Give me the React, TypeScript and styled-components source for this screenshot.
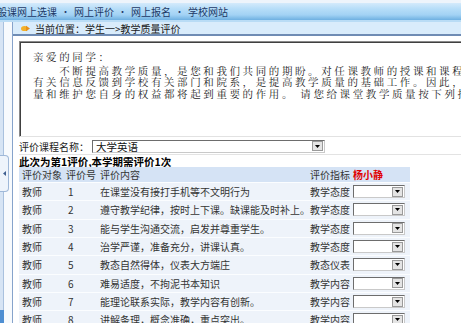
import React from "react";
import styled, { createGlobalStyle } from "styled-components";

const GlobalStyle = createGlobalStyle`
  html, body { margin: 0; padding: 0; background: #fff; overflow: hidden; }
  body { font-family: "Noto Sans CJK SC", "Noto Sans", sans-serif; font-size: 10px; color: #222; }
`;

const Page = styled.div`
  width: 461px;
  height: 323px;
  overflow: hidden;
  display: flex;
  flex-direction: column;
`;

const TopStrip = styled.div`
  height: 3px;
  background: #eef4fb;
`;

const NavBar = styled.div`
  height: 17px;
  background: linear-gradient(#d4eafb 0%, #b6ddf8 35%, #a2d2f4 70%, #6eb0e1 100%);
  display: flex;
  align-items: center;
  white-space: nowrap;
  overflow: hidden;
  color: #1d3966;
  font-size: 10px;
`;

const NavItem = styled.span<{ $first?: boolean }>`
  margin-left: ${(p) => (p.$first ? "-3px" : "0")};
`;

const NavSep = styled.span`
  width: 17px;
  text-align: center;
  font-size: 9px;
`;

const NavLine = styled.div`
  height: 2px;
  background: #b9dcf5;
`;

const Body = styled.div`
  flex: 1;
  display: flex;
  min-height: 0;
`;

const Sidebar = styled.div`
  width: 12px;
  flex: none;
  display: flex;
  flex-direction: column;
  background: linear-gradient(to right, #d6e4f4 0 3px, #a9c1de 3px 4px, #f7fafd 4px);
  border-right: 1px solid #86a3cb;
`;

const SideTab = styled.div`
  margin-top: 133px;
  width: 8px;
  height: 35px;
  background: #eef4fb;
  border: 1px solid #9fb8d8;
  border-left: none;
  border-radius: 0 4px 4px 0;
  display: flex;
  align-items: center;
  justify-content: center;
`;

const SideBlock = styled.div`
  margin-top: auto;
  width: 4px;
  height: 13px;
  background: #4f8fd2;
`;

const Main = styled.div`
  flex: 1;
  min-width: 0;
  overflow: hidden;
  display: flex;
  flex-direction: column;
`;

const Crumb = styled.div`
  height: 12px;
  background: #d9ecfb;
  border-bottom: 2px solid #6f8cb4;
  display: flex;
  align-items: center;
  padding-left: 8px;
  gap: 5px;
  font-size: 10px;
  color: #1a1a1a;
  white-space: nowrap;
`;

const Divider = styled.div`
  margin-top: 2px;
  height: 1px;
  background: #cbd2da;
`;

const Content = styled.div`
  padding: 3px 0 0 6px;
  display: flex;
  flex-direction: column;
`;

const Letter = styled.div`
  width: 520px;
  height: 96px;
  box-sizing: border-box;
  border-top: 1px solid #8a8a8a;
  border-left: 1px solid #8a8a8a;
  border-right: 1px solid #e2e2e2;
  border-bottom: 1px solid #e2e2e2;
  box-shadow: inset 1px 1px 0 #404040;
  padding: 9px 0 0 13px;
  overflow: hidden;
  font-family: "Noto Serif CJK SC", "AR PL UMing CN", "Noto Sans CJK SC", serif;
  font-size: 10.5px;
  letter-spacing: 2.6px;
  line-height: 11.5px;
  color: #1e1e1e;
`;

const LetterLine = styled.div<{ $gap?: number }>`
  white-space: nowrap;
  margin-bottom: ${(p) => p.$gap ?? 0}px;
`;

const CourseRow = styled.div`
  margin-top: 2px;
  height: 14px;
  display: flex;
  align-items: center;
  border-bottom: 1px solid #e3e3e3;
  padding-bottom: 1px;
`;

const Label = styled.span`
  width: 73px;
  font-size: 10px;
  white-space: nowrap;
`;

const Combo = styled.div<{ $w: number }>`
  width: ${(p) => p.$w}px;
  height: 13px;
  box-sizing: border-box;
  border-top: 1px solid #6d6d6d;
  border-left: 1px solid #6d6d6d;
  border-right: 1px solid #c9c9c9;
  border-bottom: 1px solid #c9c9c9;
  background: #fff;
  display: flex;
  align-items: center;
  justify-content: space-between;
  padding-left: 3px;
  font-size: 10.5px;
  color: #111;
`;

const ComboBtn = styled.span`
  width: 11px;
  height: 10px;
  margin-right: 1px;
  background: #e4e4e4;
  border: 1px solid #9a9a9a;
  box-sizing: border-box;
  display: flex;
  align-items: center;
  justify-content: center;
`;

const Notice = styled.div`
  margin-top: 1px;
  height: 11px;
  line-height: 11px;
  font-size: 10.5px;
  font-weight: 700;
  color: #000;
  white-space: nowrap;
`;

const Table = styled.div`
  width: 391px;
  display: flex;
  flex-direction: column;
`;

const Row = styled.div<{ $head?: boolean }>`
  display: grid;
  grid-template-columns: 44px 34px 210px 43px 60px;
  align-items: center;
  height: ${(p) => (p.$head ? "15px" : "18.33px")};
  box-sizing: border-box;
  background: ${(p) => (p.$head ? "#d5e3f5" : "#eef3fa")};
  border-top: ${(p) => (p.$head ? "none" : "1px solid #fbfdff")};
  font-size: 10px;
  color: #333;
  white-space: nowrap;
`;

const Cell = styled.span<{ $pad?: number }>`
  padding-left: ${(p) => p.$pad ?? 3}px;
  overflow: hidden;
`;

const Teacher = styled.span`
  padding-left: 3px;
  color: #e00000;
  font-weight: 700;
`;

const Arrow = () => (
  <svg width="5" height="3" viewBox="0 0 5 3">
    <path d="M0 0h5L2.5 3z" fill="#000" />
  </svg>
);

const rows: [string, string][] = [
  ["在课堂没有接打手机等不文明行为", "教学态度"],
  ["遵守教学纪律，按时上下课。缺课能及时补上。", "教学态度"],
  ["能与学生沟通交流，启发并尊重学生。", "教学态度"],
  ["治学严谨，准备充分，讲课认真。", "教学态度"],
  ["教态自然得体，仪表大方端庄", "教态仪表"],
  ["难易适度，不拘泥书本知识", "教学内容"],
  ["能理论联系实际，教学内容有创新。", "教学内容"],
  ["讲解条理，概念准确，重点突出。", "教学内容"],
];

export default function App() {
  return (
    <Page>
      <GlobalStyle />
      <TopStrip />
      <NavBar>
        <NavItem $first>般课网上选课</NavItem>
        <NavSep>•</NavSep>
        <NavItem>网上评价</NavItem>
        <NavSep>•</NavSep>
        <NavItem>网上报名</NavItem>
        <NavSep>•</NavSep>
        <NavItem>学校网站</NavItem>
      </NavBar>
      <NavLine />
      <Body>
        <Sidebar>
          <SideTab>
            <svg width="3" height="5" viewBox="0 0 3 5">
              <path d="M3 0v5L0 2.5z" fill="#3f5f8f" />
            </svg>
          </SideTab>
          <SideBlock />
        </Sidebar>
        <Main>
          <Crumb>
            <svg width="9" height="7" viewBox="0 0 9 7">
              <ellipse cx="3.5" cy="3.5" rx="3.5" ry="2.6" fill="#f3b12a" />
              <path d="M5 0.8L9 3.5L5 6.2z" fill="#e8901a" />
            </svg>
            <span>当前位置：学生一&gt;教学质量评价</span>
          </Crumb>
          <Divider />
          <Content>
            <Letter>
              <LetterLine $gap={2}>亲爱的同学：</LetterLine>
              <LetterLine>　　不断提高教学质量，是您和我们共同的期盼。对任课教师的授课和课程</LetterLine>
              <LetterLine>有关信息反馈到学校有关部门和院系，是提高教学质量的基础工作。因此，</LetterLine>
              <LetterLine>量和维护您自身的权益都将起到重要的作用。 请您给课堂教学质量按下列指</LetterLine>
            </Letter>
            <CourseRow>
              <Label>评价课程名称：</Label>
              <Combo $w={233}>
                <span>大学英语</span>
                <ComboBtn>
                  <Arrow />
                </ComboBtn>
              </Combo>
            </CourseRow>
            <Notice>此次为第1评价,本学期需评价1次</Notice>
            <Table>
              <Row $head>
                <Cell>评价对象</Cell>
                <Cell>评价号</Cell>
                <Cell>评价内容</Cell>
                <Cell>评价指标</Cell>
                <Teacher>杨小静</Teacher>
              </Row>
              {rows.map(([content, kind], i) => (
                <Row key={i}>
                  <Cell>教师</Cell>
                  <Cell $pad={5}>{i + 1}</Cell>
                  <Cell>{content}</Cell>
                  <Cell>{kind}</Cell>
                  <Cell>
                    <Combo $w={52}>
                      <span />
                      <ComboBtn>
                        <Arrow />
                      </ComboBtn>
                    </Combo>
                  </Cell>
                </Row>
              ))}
            </Table>
          </Content>
        </Main>
      </Body>
    </Page>
  );
}
